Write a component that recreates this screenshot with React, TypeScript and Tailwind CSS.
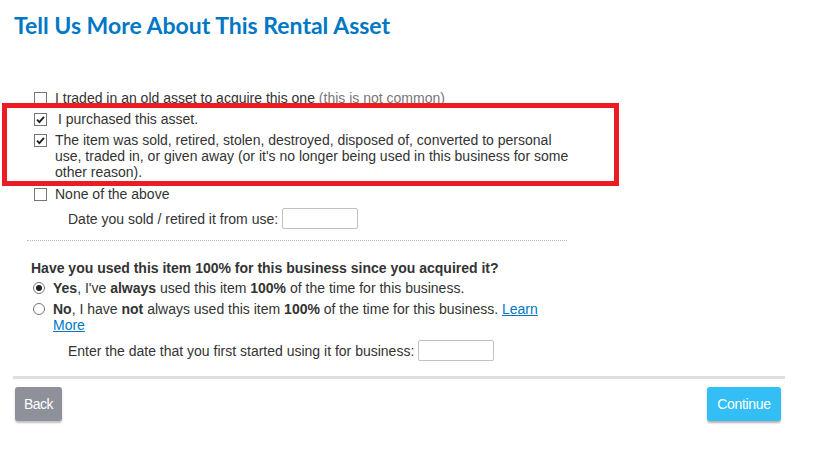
import React from "react";

const Check = ({ checked = false }: { checked?: boolean }) => (
    <span className="mt-[2px] flex h-[13px] w-[13px] shrink-0 items-center justify-center border border-[#767676] bg-white">
        {checked && (
            <svg viewBox="0 0 12 12" className="h-[11px] w-[11px]">
                <path d="M2.2 6.2 L4.8 8.8 L9.8 3.2" fill="none" stroke="#222" strokeWidth="2.1" />
            </svg>
        )}
    </span>
);

const Radio = ({ checked = false }: { checked?: boolean }) => (
    <span className="mt-[2px] flex h-[12px] w-[12px] shrink-0 items-center justify-center rounded-full border border-[#767676] bg-white">
        {checked && <span className="h-[6px] w-[6px] rounded-full bg-[#222]" />}
    </span>
);

const DateBox = () => <span className="block h-[21px] w-[76px] rounded-[2px] border border-[#c2c2c2] bg-white" />;

export default function App() {
    return (
        <div className="relative h-[453px] w-[813px] overflow-hidden bg-white font-['Liberation_Sans',Arial,sans-serif] text-[14px] leading-[16px] text-[#333]">
            <h1 className="px-[14px] pt-[12px] font-['Lato',sans-serif] text-[23px] leading-[27px] font-bold text-[#0077c5]">
                Tell Us More About This Rental Asset
            </h1>

            <div className="mt-[51px] flex flex-col pl-[34px]">
                <label className="flex gap-[8px]">
                    <Check />
                    <span>
                        I traded in an old asset to acquire this one <span className="text-[#777]">(this is not common)</span>
                    </span>
                </label>
                <label className="mt-[5px] flex gap-[8px]">
                    <Check checked />
                    <span className="pl-[3px]">I purchased this asset.</span>
                </label>
                <label className="mt-[5px] flex gap-[8px]">
                    <Check checked />
                    <span className="w-[520px]">
                        The item was sold, retired, stolen, destroyed, disposed of, converted to personal
                        <br />
                        use, traded in, or given away (or it's no longer being used in this business for some
                        <br />
                        other reason).
                    </span>
                </label>
                <label className="mt-[6px] flex gap-[8px]">
                    <Check />
                    <span>None of the above</span>
                </label>
                <div className="mt-[6px] flex items-center gap-[4px] pl-[34px]">
                    <span>Date you sold / retired it from use:</span>
                    <DateBox />
                </div>
            </div>

            <div className="mt-[11px] ml-[27px] w-[540px] border-t border-dotted border-[#bdbdbd]" />

            <div className="mt-[19px] flex flex-col pl-[31px]">
                <p className="font-bold">Have you used this item 100% for this business since you acquired it?</p>
                <label className="mt-[4px] flex gap-[8px] pl-[2px]">
                    <Radio checked />
                    <span>
                        <b>Yes</b>, I've <b>always</b> used this item <b>100%</b> of the time for this business.
                    </span>
                </label>
                <label className="mt-[5px] flex gap-[8px] pl-[2px]">
                    <Radio />
                    <span className="w-[490px]">
                        <b>No</b>, I have <b>not</b> always used this item <b>100%</b> of the time for this business.{" "}
                        <a className="text-[#0077c5] underline">Learn More</a>
                    </span>
                </label>
                <div className="mt-[7px] flex items-center gap-[4px] pl-[37px]">
                    <span>Enter the date that you first started using it for business:</span>
                    <DateBox />
                </div>
            </div>

            <div className="mx-[13px] mt-[15px] h-[3px] w-[772px] bg-[#dedede]" />

            <div className="mt-[8px] flex items-center justify-between pr-[32px] pl-[15px]">
                <button className="h-[34px] w-[47px] rounded-[3px] bg-[#8e9199] text-[14px] tracking-[-0.5px] text-white shadow-[0_2px_2px_rgba(0,0,0,0.25)]">
                    Back
                </button>
                <button className="h-[34px] w-[74px] rounded-[3px] bg-[#33bff5] text-[14px] tracking-[-0.3px] text-white shadow-[0_2px_2px_rgba(0,0,0,0.3)]">
                    Continue
                </button>
            </div>

            {/* highlight frame around the two selected options */}
            <div className="pointer-events-none absolute top-[103px] left-[2px] h-[83px] w-[617px] border-[5px] border-[#ec1c24]" />
        </div>
    );
}
